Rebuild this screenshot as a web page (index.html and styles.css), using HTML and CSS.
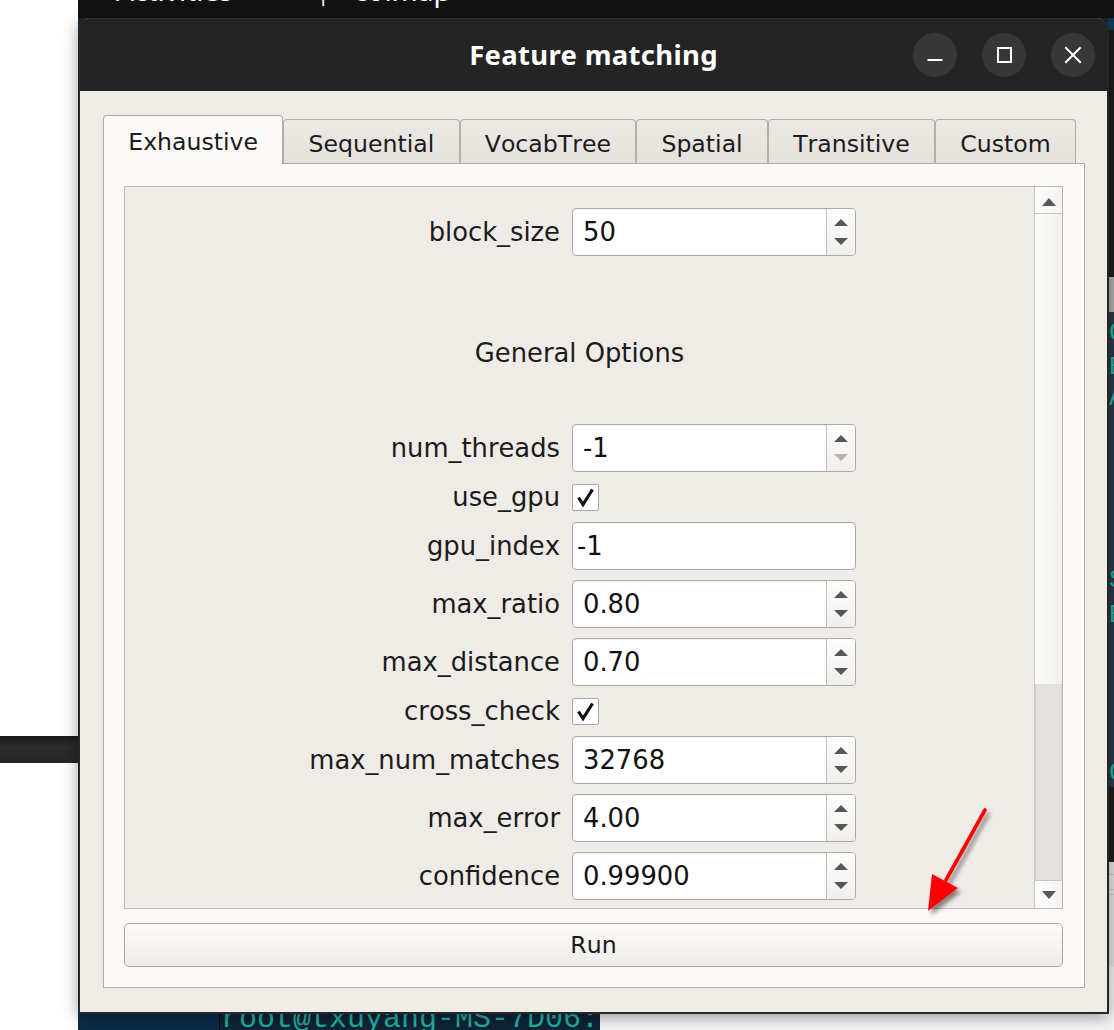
FILE: index.html
```html
<!DOCTYPE html>
<html>
<head>
<meta charset="utf-8">
<link rel="stylesheet" href="styles.css">
</head>
<body>
<div class="desktop">
  <div class="topbar">
    <span class="tb-item tb-activities">Activities</span>
    <span class="tb-item tb-icon">┐</span>
    <span class="tb-item tb-app">colmap</span>
  </div>

  <div class="left-window"><div class="left-bar"></div></div>

  <div class="right-strip">
    <div class="rs rs-dark"></div>
    <div class="rs rs-blue"></div>
    <div class="rs rs-dark2"></div>
    <div class="rs rs-grey"></div>
    <div class="rs rs-slate">
      <span class="rs-ch ch1">C</span>
      <span class="rs-ch ch2">E</span>
      <span class="rs-ch ch3">A</span>
      <span class="rs-ch ch4">S</span>
      <span class="rs-ch ch5">E</span>
      <span class="rs-ch ch6">C</span>
    </div>
    <div class="rs rs-dark3"></div>
    <div class="rs rs-lines"></div>
    <div class="rs rs-white"></div>
  </div>

  <div class="bottom-white"></div>
  <div class="terminal"><span class="term-text">root@txuyang-MS-7D06:</span></div>

  <div class="window">
    <header class="titlebar">
      <div class="title">Feature matching</div>
      <div class="wm-buttons">
        <span class="wm-btn"><svg width="44" height="44" viewBox="0 0 44 44"><rect x="14.5" y="26" width="15" height="2" fill="#fff"/></svg></span>
        <span class="wm-btn"><svg width="44" height="44" viewBox="0 0 44 44"><rect x="16" y="15" width="13" height="14" fill="none" stroke="#fff" stroke-width="2"/></svg></span>
        <span class="wm-btn"><svg width="44" height="44" viewBox="0 0 44 44"><path d="M15 15 L29 29 M29 15 L15 29" stroke="#fff" stroke-width="2" stroke-linecap="square"/></svg></span>
      </div>
    </header>

    <div class="client">
      <div class="tabwidget">
        <div class="tabbar">
          <div class="tab active">Exhaustive</div>
          <div class="tab">Sequential</div>
          <div class="tab">VocabTree</div>
          <div class="tab">Spatial</div>
          <div class="tab">Transitive</div>
          <div class="tab">Custom</div>
        </div>
        <div class="pane">
          <div class="scrollarea">
            <div class="viewport">
              <div class="form-grid first-grid">
                <div class="lbl">block_size</div>
                <div class="spin"><span class="spin-value">50</span><span class="spin-btns"><i class="arr up"></i><i class="arr down"></i></span></div>
              </div>
              <div class="section">General Options</div>
              <div class="form-grid">
                <div class="lbl">num_threads</div>
                <div class="spin"><span class="spin-value">-1</span><span class="spin-btns"><i class="arr up"></i><i class="arr down disabled"></i></span></div>

                <div class="lbl">use_gpu</div>
                <div class="check-cell"><span class="check"><svg width="25" height="25" viewBox="0 0 25 25"><path d="M5.5 12.5 L10 19.5 L19.5 4.5" fill="none" stroke="#111" stroke-width="3.2" stroke-linejoin="miter"/></svg></span></div>

                <div class="lbl">gpu_index</div>
                <div class="lineedit"><span class="le-value">-1</span></div>

                <div class="lbl">max_ratio</div>
                <div class="spin"><span class="spin-value">0.80</span><span class="spin-btns"><i class="arr up"></i><i class="arr down"></i></span></div>

                <div class="lbl">max_distance</div>
                <div class="spin"><span class="spin-value">0.70</span><span class="spin-btns"><i class="arr up"></i><i class="arr down"></i></span></div>

                <div class="lbl">cross_check</div>
                <div class="check-cell"><span class="check"><svg width="25" height="25" viewBox="0 0 25 25"><path d="M5.5 12.5 L10 19.5 L19.5 4.5" fill="none" stroke="#111" stroke-width="3.2" stroke-linejoin="miter"/></svg></span></div>

                <div class="lbl">max_num_matches</div>
                <div class="spin"><span class="spin-value">32768</span><span class="spin-btns"><i class="arr up"></i><i class="arr down"></i></span></div>

                <div class="lbl">max_error</div>
                <div class="spin"><span class="spin-value">4.00</span><span class="spin-btns"><i class="arr up"></i><i class="arr down"></i></span></div>

                <div class="lbl">confidence</div>
                <div class="spin"><span class="spin-value">0.99900</span><span class="spin-btns"><i class="arr up"></i><i class="arr down"></i></span></div>
              </div>
            </div>
            <div class="scrollbar">
              <div class="sb-btn sb-up"><i class="sb-arr up"></i></div>
              <div class="sb-track"></div>
              <div class="sb-handle"></div>
              <div class="sb-btn sb-down"><i class="sb-arr down"></i></div>
            </div>
          </div>
          <button class="run">Run</button>
        </div>
      </div>
    </div>
  </div>

  <svg class="annotation" width="1114" height="1030" viewBox="0 0 1114 1030">
    <defs>
      <filter id="sh" x="-50%" y="-50%" width="200%" height="200%">
        <feDropShadow dx="3" dy="4" stdDeviation="2.2" flood-color="#000" flood-opacity="0.45"/>
      </filter>
    </defs>
    <g filter="url(#sh)">
      <line x1="985" y1="810" x2="946" y2="880" stroke="#ff0000" stroke-width="3.6" stroke-linecap="round"/>
      <polygon points="932,874 958,888 928,911" fill="#ff0000"/>
    </g>
  </svg>
</div>
</body>
</html>
```

FILE: styles.css
```css
* { box-sizing: border-box; }
html, body { margin: 0; padding: 0; }
body {
  width: 1114px;
  height: 1030px;
  overflow: hidden;
  background: #0c2c4a;
  font-family: "DejaVu Sans", sans-serif;
  font-kerning: none;
}

.desktop {
  position: relative;
  width: 1114px;
  height: 1030px;
  overflow: hidden;
  background: #0c2c4a;
}

/* ---------- GNOME top bar (mostly hidden) ---------- */
.topbar {
  height: 18px;
  background: #121212;
  display: flex;
  align-items: flex-start;
  padding-left: 116px;
  overflow: hidden;
  color: #ffffff;
  font-family: "Noto Sans", sans-serif;
  font-size: 28px;
  line-height: 28px;
}
.tb-item { margin-top: -24px; white-space: nowrap; }
.tb-activities { width: 201px; }
.tb-icon { width: 37px; font-family: "DejaVu Sans", sans-serif; font-size: 20px; margin-top: -20px; }

/* ---------- windows behind ---------- */
.left-window {
  position: absolute;
  left: 0;
  top: 0;
  width: 78px;
  height: 1030px;
  background: #ffffff;
}
.left-bar {
  margin-top: 736px;
  width: 80px;
  height: 27px;
  background: linear-gradient(#1b1b1b, #2b2b2b 40%, #262626);
}

.right-strip {
  position: absolute;
  left: 1108px;
  top: 0;
  width: 6px;
  height: 1030px;
  display: flex;
  flex-direction: column;
  overflow: hidden;
}
.rs { flex: none; }
.rs-dark { height: 18px; background: #121212; }
.rs-blue { height: 12px; background: #0d3a5a; }
.rs-dark2 { height: 247px; background: #1c1c1c; }
.rs-grey { height: 35px; background: #aeaeae; }
.rs-slate {
  height: 475px;
  background: #2a3947;
  display: flex;
  flex-direction: column;
  padding-left: 1px;
  color: #1fb3a6;
  font-family: "Liberation Mono", monospace;
  font-size: 26px;
  line-height: 22px;
}
.rs-ch { display: block; height: 22px; }
.ch1 { margin-top: 10px; }
.ch2 { margin-top: 12px; }
.ch3 { margin-top: 9px; }
.ch4 { margin-top: 160px; }
.ch5 { margin-top: 13px; }
.ch6 { margin-top: 136px; }
.rs-dark3 { height: 75px; background: #1c1c1c; }
.rs-lines {
  height: 105px;
  background:
    linear-gradient(#c9c9c9, #c9c9c9) 0 12px / 100% 1px no-repeat,
    linear-gradient(#c9c9c9, #c9c9c9) 0 27px / 100% 1px no-repeat,
    linear-gradient(#c9c9c9, #c9c9c9) 0 32px / 100% 1px no-repeat,
    #e4e4e4;
}
.rs-white { flex: 1; background: #f3f3f3; }

.bottom-white {
  position: absolute;
  left: 600px;
  top: 980px;
  width: 514px;
  height: 50px;
  background: #f4f4f4;
}

.terminal {
  position: absolute;
  left: 219px;
  top: 980px;
  width: 381px;
  height: 50px;
  background: #0f2437;
  border-left: 1px solid #000;
  padding-left: 1px;
  color: #1fb3a6;
  font-family: "Liberation Mono", monospace;
  font-size: 30px;
  line-height: 30px;
  padding-top: 24px;
  overflow: hidden;
}
.term-text { white-space: nowrap; }

/* ---------- main window ---------- */
.window {
  position: absolute;
  left: 78px;
  top: 18px;
  width: 1031px;
  height: 996px;
  display: flex;
  flex-direction: column;
  border: 2px solid #262626;
  border-top: none;
  border-radius: 12px 12px 0 0;
  background: #efebe7;
  box-shadow: 0 3px 16px rgba(0, 0, 0, 0.38);
}

.titlebar {
  height: 73px;
  flex: none;
  margin: 0 -2px;
  background: #242424;
  border-radius: 12px 12px 0 0;
  border-top: 1px solid #333333;
  display: grid;
  grid-template-columns: 1fr auto 1fr;
  align-items: center;
  color: #ffffff;
}
.title {
  grid-column: 2;
  font-family: "Noto Sans", sans-serif;
  font-weight: 700;
  font-size: 27.5px;
  letter-spacing: 0.3px;
  padding-bottom: 2px;
  font-kerning: normal;
}
.wm-buttons {
  grid-column: 3;
  justify-self: end;
  display: flex;
  gap: 25px;
  padding-right: 14px;
}
.wm-btn {
  width: 44px;
  height: 44px;
  border-radius: 50%;
  background: #373737;
  display: block;
}
.wm-btn svg { display: block; }

.client {
  flex: 1;
  padding: 24px 22px 24px 23px;
  display: flex;
  flex-direction: column;
}

.tabwidget {
  flex: 1;
  display: flex;
  flex-direction: column;
}
.tabbar {
  display: flex;
  align-items: flex-end;
  height: 48px;
  position: relative;
  z-index: 1;
}
.tab {
  height: 44px;
  padding: 5px 24.25px 0;
  border: 1px solid #b3afab;
  border-bottom: none;
  border-radius: 4px 4px 0 0;
  background: linear-gradient(#ece9e5, #e5e2de);
  color: #1b1b1b;
  font-size: 23.6px;
  display: flex;
  align-items: center;
  white-space: nowrap;
}
.tab.active {
  height: 49px;
  margin-bottom: -1px;
  padding-top: 4px;
  background: #fcfaf8;
  border-color: #aeaaa6;
}

.pane {
  flex: 1;
  background: #fcfaf8;
  border: 1px solid #aeaaa6;
  padding: 22px 21px 20px 20px;
  display: flex;
  flex-direction: column;
  gap: 14px;
}

.scrollarea {
  flex: 1;
  display: flex;
  border: 1px solid #bdb9b5;
  background: #efebe7;
  min-height: 0;
}
.viewport {
  flex: 1;
  overflow: hidden;
  padding-top: 21px;
}

.form-grid {
  display: grid;
  grid-template-columns: 435px 284px;
  column-gap: 12px;
  row-gap: 10px;
  align-items: center;
}
.lbl {
  text-align: right;
  font-size: 25.8px;
  color: #1b1b1b;
  white-space: nowrap;
  line-height: 30px;
}
.section {
  margin: 82px 0 56px;
  text-align: center;
  font-size: 25.8px;
  line-height: 30px;
  color: #1b1b1b;
}

.spin, .lineedit {
  height: 48px;
  border: 1px solid #aca8a4;
  border-radius: 4px;
  background: #ffffff;
  box-shadow: inset 0 1px 1px rgba(0, 0, 0, 0.06);
  display: flex;
  align-items: center;
  font-size: 25.8px;
  color: #111111;
}
.spin-value { flex: 1; padding-left: 10px; }
.le-value { padding-left: 4px; }
.spin-btns {
  width: 29px;
  align-self: stretch;
  border-left: 1px solid #c4c0bc;
  border-radius: 0 3px 3px 0;
  background: linear-gradient(#fdfdfc, #f1efec);
  display: flex;
  flex-direction: column;
  align-items: center;
  justify-content: center;
  gap: 12px;
}
.arr { display: block; width: 0; height: 0; border-left: 7px solid transparent; border-right: 7px solid transparent; }
.arr.up { border-bottom: 7px solid #565656; }
.arr.down { border-top: 7px solid #565656; }
.arr.down.disabled { border-top-color: #b4b2b0; }

.check-cell { height: 28px; display: flex; align-items: center; }
.check {
  width: 27px;
  height: 27px;
  border: 1px solid #aca8a4;
  border-radius: 2px;
  background: #ffffff;
  display: block;
}
.check svg { display: block; }

/* ---------- scrollbar ---------- */
.scrollbar {
  width: 28px;
  border-left: 1px solid #c9c5c1;
  display: flex;
  flex-direction: column;
  background: linear-gradient(90deg, #fbfbfa, #f0efed);
}
.sb-btn {
  height: 27px;
  display: flex;
  align-items: center;
  justify-content: center;
  background: linear-gradient(90deg, #fdfdfc, #f4f3f1);
}
.sb-up { border-bottom: 1px solid #c9c5c1; }
.sb-down { border-top: 1px solid #c9c5c1; height: 28px; }
.sb-track { flex: 1; }
.sb-handle {
  height: 196px;
  background: #e3e1de;
  border-left: 1px solid #d3cfcb;
  border-right: 1px solid #d3cfcb;
}
.sb-arr { display: block; width: 0; height: 0; border-left: 7.5px solid transparent; border-right: 7.5px solid transparent; }
.sb-arr.up { border-bottom: 8px solid #585858; margin-top: 3px; }
.sb-arr.down { border-top: 8px solid #585858; }

/* ---------- run button ---------- */
.run {
  height: 44px;
  flex: none;
  border: 1px solid #aaa6a2;
  border-radius: 5px;
  background: linear-gradient(#fdfcfb, #eeece9);
  font-family: "DejaVu Sans", sans-serif;
  font-kerning: none;
  font-size: 23.6px;
  color: #1b1b1b;
  padding: 0;
}

/* ---------- annotation ---------- */
.annotation {
  position: absolute;
  left: 0;
  top: 0;
  pointer-events: none;
}
```
